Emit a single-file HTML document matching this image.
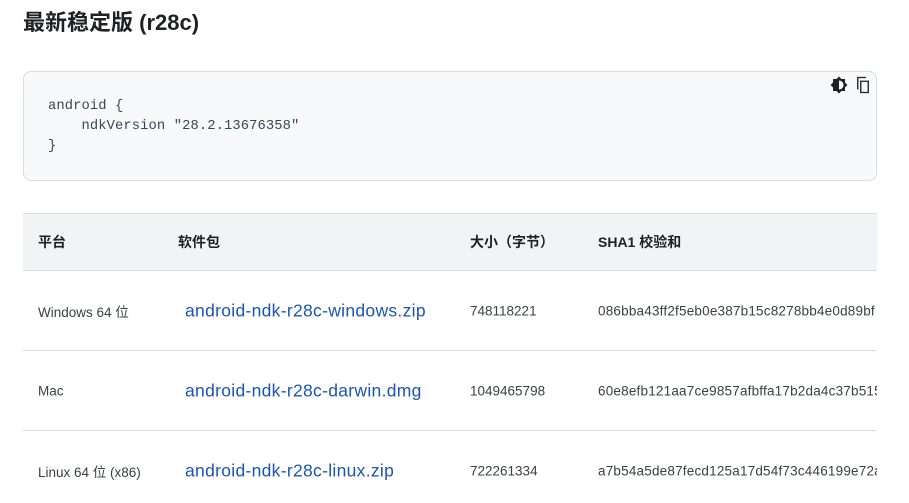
<!DOCTYPE html>
<html><head><meta charset="utf-8"><style>
body{margin:0;background:#fff;font-family:"Liberation Sans","Noto Sans CJK SC",sans-serif;color:#202124;width:909px;height:499px;overflow:hidden;position:relative}
h2{position:absolute;left:23px;top:7px;margin:0;font-size:22px;font-weight:bold;line-height:32px;color:#202124}
.code{position:absolute;left:23px;top:71px;width:852px;height:108px;background:#f8f9fa;border:1px solid #dadce0;border-radius:8px}
pre{position:absolute;left:24px;top:25px;margin:0;font-family:"Liberation Mono",monospace;font-size:13.8px;line-height:20px;color:#37474f;letter-spacing:0.1px}
.ic{position:absolute;top:4px}
.tbl{position:absolute;left:23px;top:213px;width:854px;overflow:hidden;height:290px}
.hd{height:56px;background:#f1f3f4;border-top:1px solid #dadce0;border-bottom:1px solid #dadce0;position:relative;font-weight:bold;font-size:14px}
.row{height:79px;border-bottom:1px solid #dadce0;position:relative;font-size:13.5px;color:#3c4043}
.c{position:absolute;white-space:nowrap;top:50%;transform:translateY(-50%)}
.h{letter-spacing:0.2px}
.a{color:#1a56b0;font-size:17.5px;letter-spacing:0.3px}
</style></head><body>
<h2>最新稳定版 (r28c)</h2>
<div class="code">
<svg class="ic" style="left:806px;top:4px" width="18" height="18" viewBox="0 0 24 24"><path fill="#202124" d="M20 8.69V4h-4.69L12 .69 8.69 4H4v4.69L.69 12 4 15.31V20h4.69L12 23.31 15.31 20H20v-4.69L23.31 12 20 8.69zM12 18V6c3.31 0 6 2.69 6 6s-2.69 6-6 6z"/></svg>
<svg class="ic" style="left:830px;top:4px" width="18" height="18" viewBox="0 0 24 24"><path fill="none" stroke="#202124" stroke-width="1.8" d="M9 7h10v15H9zM5 18V2h11"/></svg>
<pre>android {
    ndkVersion "28.2.13676358"
}</pre>
</div>
<div class="tbl">
<div class="hd"><span class="c" style="left:15px">平台</span><span class="c" style="left:155px">软件包</span><span class="c" style="left:447px">大小（字节）</span><span class="c" style="left:575px">SHA1 校验和</span></div>
<div class="row"><span class="c" style="left:15px">Windows 64 位</span><span class="c a" style="left:162px">android-ndk-r28c-windows.zip</span><span class="c" style="left:447px">748118221</span><span class="c h" style="left:575px">086bba43ff2f5eb0e387b15c8278bb4e0d89bf</span></div>
<div class="row"><span class="c" style="left:15px">Mac</span><span class="c a" style="left:162px">android-ndk-r28c-darwin.dmg</span><span class="c" style="left:447px">1049465798</span><span class="c h" style="left:575px">60e8efb121aa7ce9857afbffa17b2da4c37b515</span></div>
<div class="row"><span class="c" style="left:15px">Linux 64 位 (x86)</span><span class="c a" style="left:162px">android-ndk-r28c-linux.zip</span><span class="c" style="left:447px">722261334</span><span class="c h" style="left:575px">a7b54a5de87fecd125a17d54f73c446199e72a</span></div>
</div>
</body></html>
